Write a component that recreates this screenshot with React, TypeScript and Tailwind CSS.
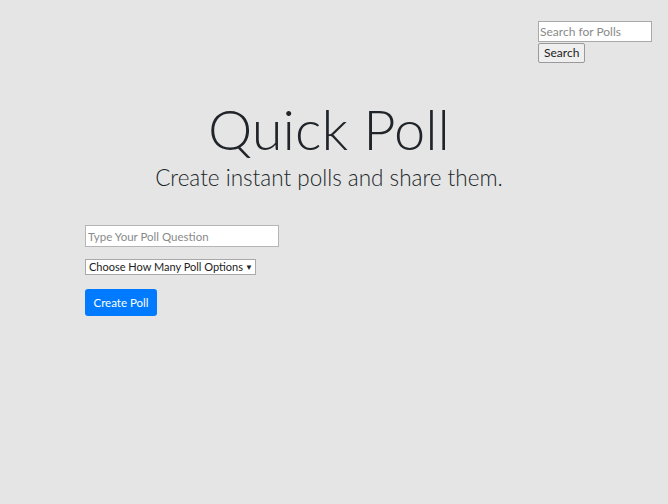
import React, { useState } from 'react';

export default function App() {
  const [question, setQuestion] = useState('');
  const [search, setSearch] = useState('');

  return (
    <div className="min-h-[504px] bg-[#e5e5e5] text-[#212529] font-['Lato','Open_Sans',sans-serif]">
      {/* Search box */}
      <div className="flex justify-end pt-[21px] pr-[16px]">
        <div className="flex flex-col items-start">
          <input
            value={search}
            onChange={(e) => setSearch(e.target.value)}
            placeholder="Search for Polls"
            className="w-[114px] h-[21px] bg-white border border-[#a9a9a9] px-[1px] text-[12px] placeholder:text-[#8a8a8a] outline-none"
          />
          <button className="mt-[1px] h-[20px] px-[5px] text-[12px] text-[#222] bg-[#efefef] border border-[#9a9a9a] rounded-[2px]">
            Search
          </button>
        </div>
      </div>

      {/* Header */}
      <div className="flex flex-col items-center pr-[10px] mt-[32px]">
        <h1 className="text-[56px] leading-[67px] font-light">Quick Poll</h1>
        <p className="text-[22.5px] leading-[30px] font-light mt-[1px]">Create instant polls and share them.</p>
      </div>

      {/* Form */}
      <div className="pl-[85px] mt-[32px] flex flex-col items-start">
        <input
          value={question}
          onChange={(e) => setQuestion(e.target.value)}
          placeholder="Type Your Poll Question"
          className="w-[194px] h-[22px] bg-white border border-[#b5b5b5] px-[2px] text-[11.5px] placeholder:text-[#8a8a8a] outline-none"
        />
        <div className="mt-[12px] w-[171px] h-[16px] bg-white border border-[#a9a9a9] flex items-center justify-between gap-[2px] pl-[3px] pr-[4px] text-[11px] leading-[14px] whitespace-nowrap text-[#222]">
          <span>Choose How Many Poll Options</span>
          <span className="text-[8px]">▼</span>
        </div>
        <button className="mt-[14px] w-[72px] h-[27px] bg-[#007bff] text-white text-[11.5px] rounded-[3px]">
          Create Poll
        </button>
      </div>
    </div>
  );
}
